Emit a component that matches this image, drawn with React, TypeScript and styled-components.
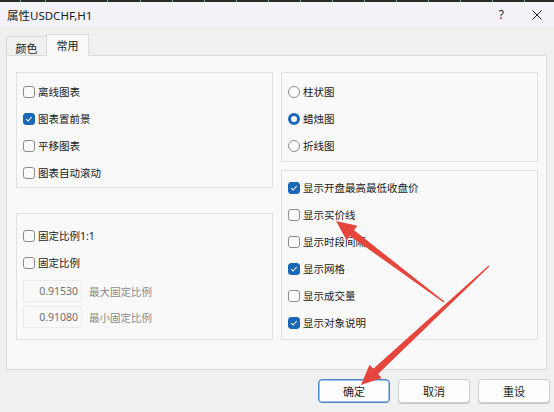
import styled, { createGlobalStyle } from 'styled-components';

const GlobalStyle = createGlobalStyle`
  html, body {
    margin: 0;
    padding: 0;
    background: #f0f0f0;
  }
  * {
    box-sizing: border-box;
  }
`;

const FONT = `"Segoe UI", "Noto Sans", "Noto Sans CJK SC", sans-serif`;

type Pt = [number, number];

// tapered annotation arrow: thin tail, wide shaft near the head
const arrowPoints = (tail: Pt, tip: Pt, headLen = 20, headHalf = 9, shaftHalf = 3.5) => {
  const dx = tip[0] - tail[0];
  const dy = tip[1] - tail[1];
  const len = Math.hypot(dx, dy);
  const ux = dx / len;
  const uy = dy / len;
  const nx = -uy;
  const ny = ux;
  const bx = tip[0] - ux * headLen;
  const by = tip[1] - uy * headLen;
  const pts: Pt[] = [
    [tail[0] + nx * 0.6, tail[1] + ny * 0.6],
    [bx + nx * shaftHalf, by + ny * shaftHalf],
    [bx + nx * headHalf, by + ny * headHalf],
    tip,
    [bx - nx * headHalf, by - ny * headHalf],
    [bx - nx * shaftHalf, by - ny * shaftHalf],
    [tail[0] - nx * 0.6, tail[1] - ny * 0.6],
  ];
  return pts.map((p) => p.map((v) => v.toFixed(1)).join(',')).join(' ');
};

const Check = ({ on }: { on: boolean }) => (
  <CheckBox $on={on}>
    {on && (
      <svg width="8" height="8" viewBox="0 0 8 8">
        <path d="M1.2 4.2 L3.1 6 L6.8 2" fill="none" stroke="#fff" strokeWidth="1.1" />
      </svg>
    )}
  </CheckBox>
);

const CheckRow = ({ label, on = false }: { label: string; on?: boolean }) => (
  <Row>
    <Check on={on} />
    <Label>{label}</Label>
  </Row>
);

const RadioRow = ({ label, on = false }: { label: string; on?: boolean }) => (
  <Row>
    <Radio $on={on} />
    <Label>{label}</Label>
  </Row>
);

const App = () => {
  const ticks = [20, 45, 107, 140, 172, 204, 236, 268, 300, 332, 364, 396, 428, 460, 492, 524];
  return (
    <>
      <GlobalStyle />
      <Window>
        <TopStrip>
          {ticks.map((x) => (
            <Tick key={x} style={{ left: x }} />
          ))}
        </TopStrip>
        <TitleBar>
          <Title>属性USDCHF,H1</Title>
          <TitleButtons>
            <Help>?</Help>
            <svg width="10" height="10" viewBox="0 0 10 10">
              <path d="M0.5 0.5 L9.5 9.5 M9.5 0.5 L0.5 9.5" stroke="#222" strokeWidth="1" />
            </svg>
          </TitleButtons>
        </TitleBar>
        <Body>
          <Tabs>
            <Tab>颜色</Tab>
            <Tab $active>常用</Tab>
          </Tabs>
          <Panel>
            <Column>
              <Group $h={116} $pad={5}>
                <CheckRow label="离线图表" />
                <CheckRow label="图表置前景" on />
                <CheckRow label="平移图表" />
                <CheckRow label="图表自动滚动" />
              </Group>
              <Group $h={127} $pad={8} $mt={25}>
                <CheckRow label="固定比例1:1" />
                <CheckRow label="固定比例" />
                <FieldRow>
                  <Field>0.91530</Field>
                  <FieldLabel>最大固定比例</FieldLabel>
                </FieldRow>
                <FieldRow>
                  <Field>0.91080</Field>
                  <FieldLabel>最小固定比例</FieldLabel>
                </FieldRow>
              </Group>
            </Column>
            <Column>
              <Group $h={90} $pad={5}>
                <RadioRow label="柱状图" />
                <RadioRow label="蜡烛图" on />
                <RadioRow label="折线图" />
              </Group>
              <Group $h={170} $pad={3} $mt={8}>
                <CheckRow label="显示开盘最高最低收盘价" on />
                <CheckRow label="显示买价线" />
                <CheckRow label="显示时段间隔" />
                <CheckRow label="显示网格" on />
                <CheckRow label="显示成交量" />
                <CheckRow label="显示对象说明" on />
              </Group>
            </Column>
          </Panel>
          <Buttons>
            <Button $default>确定</Button>
            <Button>取消</Button>
            <Button>重设</Button>
          </Buttons>
        </Body>
        <Overlay width="554" height="412" viewBox="0 0 554 412">
          <polygon points={arrowPoints([444, 302], [336, 221])} fill="#e5453d" />
          <polygon points={arrowPoints([489, 266], [361, 385])} fill="#e5453d" />
        </Overlay>
      </Window>
    </>
  );
};

export default App;

const Window = styled.div`
  position: relative;
  width: 554px;
  height: 412px;
  background: #f0f0f0;
  font-family: ${FONT};
  overflow: hidden;
`;

const TopStrip = styled.div`
  position: relative;
  height: 2px;
  background: #2b2b2b;
`;

const Tick = styled.div`
  position: absolute;
  top: 0;
  width: 1px;
  height: 2px;
  background: #5fbf5f;
`;

const TitleBar = styled.div`
  height: 25px;
  display: flex;
  align-items: center;
  justify-content: space-between;
  padding: 0 12px 0 7px;
  background: #f3f3f7;
`;

const Title = styled.div`
  font-size: 11.5px;
  color: #1a1a1a;
`;

const TitleButtons = styled.div`
  display: flex;
  align-items: center;
  gap: 28px;
`;

const Help = styled.span`
  font-size: 12px;
  color: #222;
`;

const Body = styled.div`
  padding: 7px 6px 0 6px;
`;

const Tabs = styled.div`
  display: flex;
  align-items: flex-end;
  height: 22px;
  position: relative;
  z-index: 1;
  margin-bottom: -1px;
`;

const Tab = styled.div<{ $active?: boolean }>`
  height: ${(p) => (p.$active ? 22 : 20)}px;
  padding: ${(p) => (p.$active ? '2px 0 0 0' : '3px 0 0 0')};
  width: ${(p) => (p.$active ? 43 : 41)}px;
  font-size: 11px;
  white-space: nowrap;
  color: #1a1a1a;
  background: ${(p) => (p.$active ? '#f9f9f9' : '#f0f0f0')};
  border: 1px solid #dadada;
  border-bottom: ${(p) => (p.$active ? '1px solid #f9f9f9' : '1px solid #dadada')};
  margin-left: ${(p) => (p.$active ? -1 : 0)}px;
  text-align: center;
`;

const Panel = styled.div`
  width: 541px;
  height: 315px;
  background: #f9f9f9;
  border: 1px solid #dadada;
  display: flex;
  gap: 8px;
  padding: 16px 8px 0 9px;
`;

const Column = styled.div`
  width: 258px;
  display: flex;
  flex-direction: column;
`;

const Group = styled.div<{ $h: number; $pad: number; $mt?: number }>`
  height: ${(p) => p.$h}px;
  margin-top: ${(p) => p.$mt ?? 0}px;
  border: 1px solid #e1e1e1;
  padding: ${(p) => p.$pad}px 6px 0 6px;
  display: flex;
  flex-direction: column;
`;

const Row = styled.div`
  height: 27px;
  display: flex;
  align-items: center;
  gap: 3px;
`;

const Label = styled.span`
  font-size: 10.5px;
  color: #1a1a1a;
  white-space: nowrap;
`;

const CheckBox = styled.span<{ $on: boolean }>`
  width: 12px;
  height: 12px;
  border-radius: 3px;
  border: 1px solid ${(p) => (p.$on ? '#1a66b8' : '#8c8c8c')};
  background: ${(p) => (p.$on ? '#1a66b8' : '#fbfbfb')};
  display: flex;
  align-items: center;
  justify-content: center;
  flex-shrink: 0;
`;

const Radio = styled.span<{ $on: boolean }>`
  width: 12px;
  height: 12px;
  border-radius: 50%;
  border: ${(p) => (p.$on ? '3.5px solid #1a66b8' : '1px solid #8c8c8c')};
  background: #fbfbfb;
  flex-shrink: 0;
`;

const FieldRow = styled.div`
  display: flex;
  align-items: center;
  gap: 7px;
  height: 22px;
  margin-top: 4px;
  &:first-of-type {
    margin-top: 0;
  }
`;

const Field = styled.div`
  width: 59px;
  height: 22px;
  border: 1px solid #ebebeb;
  border-radius: 2px;
  background: #f9f9f9;
  font-size: 10.5px;
  color: #707070;
  display: flex;
  align-items: center;
  justify-content: flex-end;
  padding-right: 3px;
`;

const FieldLabel = styled.span`
  font-size: 10.5px;
  color: #8a8a8a;
`;

const Buttons = styled.div`
  display: flex;
  justify-content: flex-end;
  gap: 8px;
  padding: 9px 0 0 0;
  margin-right: -2px;
`;

const Button = styled.div<{ $default?: boolean }>`
  width: 72px;
  height: 24px;
  border-radius: 4px;
  background: #fdfdfd;
  border: 1px solid ${(p) => (p.$default ? '#4a86c5' : '#d0d0d0')};
  box-shadow: ${(p) => (p.$default ? 'inset 0 0 0 0.5px #4a86c5' : '0 1px 0 #c4c4c4')};
  font-size: 11px;
  color: #1a1a1a;
  display: flex;
  align-items: center;
  justify-content: center;
`;

const Overlay = styled.svg`
  position: absolute;
  left: 0;
  top: 0;
  pointer-events: none;
`;
